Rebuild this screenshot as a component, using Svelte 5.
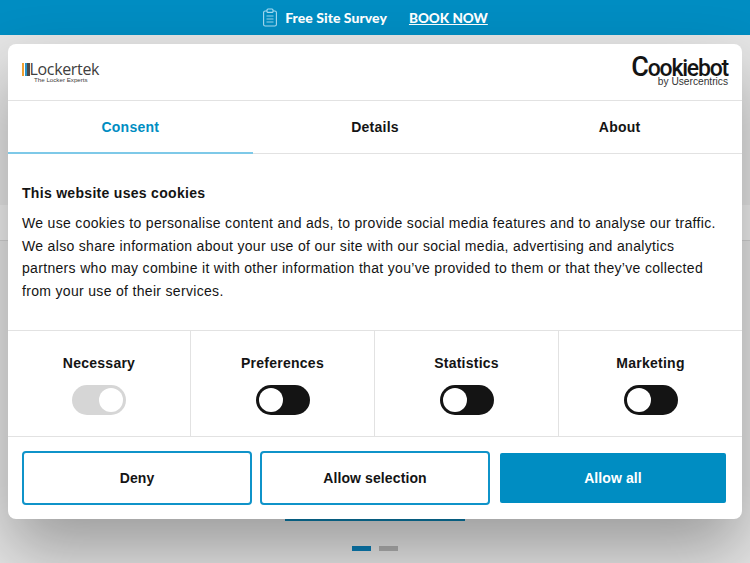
<script>
  const tabs = ["Consent", "Details", "About"];
  const toggles = [
    { name: "Necessary", locked: true },
    { name: "Preferences", locked: false },
    { name: "Statistics", locked: false },
    { name: "Marketing", locked: false }
  ];
</script>

<div class="page">
  <header class="topbar">
    <svg class="clip" width="16" height="19" viewBox="0 0 16 19" fill="none" stroke="#a9dcf1" stroke-width="1.1">
      <rect x="1.6" y="3" width="12.8" height="15" rx="1.6" />
      <rect x="5" y="1" width="6" height="3.4" rx="1" fill="#008dc2" />
      <path d="M4.5 8h7M4.5 11h7M4.5 14h7" stroke-width="0.9" />
    </svg>
    <span class="survey">Free Site Survey</span>
    <a class="book" href="#book">BOOK NOW</a>
  </header>

  <div class="behind">
    <div class="band"></div>
    <div class="cta"></div>
    <div class="dots"><i class="on"></i><i></i></div>
  </div>

  <div class="dialog">
    <div class="brand">
      <div class="locker">
        <div class="locker-top">
          <span class="bars"><i class="b1"></i><i class="b2"></i><i class="b3"></i></span>
          <span class="locker-name">Lockertek</span>
        </div>
        <div class="locker-sub">The Locker Experts</div>
      </div>
      <div class="cookiebot">
        <div class="cb-name"><span class="cb-c">C</span>ookiebot</div>
        <div class="cb-sub">by Usercentrics</div>
      </div>
    </div>

    <nav class="tabs">
      {#each tabs as tab, i (tab)}
        <div class="tab" class:active={i === 0}>{tab}</div>
      {/each}
    </nav>

    <section class="body">
      <h2>This website uses cookies</h2>
      <p>We use cookies to personalise content and ads, to provide social media features and to analyse our traffic. We also share information about your use of our site with our social media, advertising and analytics partners who may combine it with other information that you’ve provided to them or that they’ve collected from your use of their services.</p>
    </section>

    <div class="choices">
      {#each toggles as t (t.name)}
        <div class="choice">
          <strong>{t.name}</strong>
          <span class="switch" class:locked={t.locked}><i></i></span>
        </div>
      {/each}
    </div>

    <footer class="actions">
      <button class="btn">Deny</button>
      <button class="btn">Allow selection</button>
      <button class="btn primary">Allow all</button>
    </footer>
  </div>
</div>

<style>
  :global(body) {
    margin: 0;
  }

  .page {
    position: relative;
    width: 750px;
    height: 563px;
    overflow: hidden;
    background: #e6e6e6;
    font-family: "Liberation Sans", Arial, sans-serif;
    color: #141414;
  }

  .topbar {
    height: 35px;
    background: #008dc2;
    display: flex;
    align-items: center;
    justify-content: center;
    font-family: Lato, sans-serif;
    font-size: 14px;
    font-weight: 900;
    color: #fff;
  }

  .clip {
    margin-right: 7px;
  }

  .survey {
    margin-right: 22px;
    letter-spacing: 0.05px;
  }

  .book {
    color: #fff;
    font-size: 13.5px;
    text-decoration: underline;
  }

  .behind {
    height: 528px;
    display: flex;
    flex-direction: column;
    align-items: center;
  }

  .band {
    align-self: stretch;
    height: 35px;
    margin-top: 170px;
    background: rgba(255, 255, 255, 0.35);
    border-bottom: 1px solid rgba(0, 0, 0, 0.12);
  }

  .cta {
    width: 180px;
    height: 2px;
    margin-top: 278px;
    background: #0a7fae;
  }

  .dots {
    display: flex;
    gap: 8px;
    margin-top: 25px;
  }

  .dots i {
    width: 19px;
    height: 5px;
    background: #b0b0b0;
  }

  .dots i.on {
    background: #0a7db5;
  }

  .dialog {
    position: absolute;
    left: 8px;
    top: 44px;
    width: 734px;
    height: 475px;
    background: #fff;
    border-radius: 8px;
    box-shadow: 0 32px 68px rgba(0, 0, 0, 0.33);
    display: flex;
    flex-direction: column;
  }

  .brand {
    height: 57px;
    box-sizing: border-box;
    display: flex;
    justify-content: space-between;
    padding: 0 14px;
    border-bottom: 1px solid #e2e2e2;
  }

  .locker {
    margin-top: 17.5px;
    color: #404040;
  }

  .locker-top {
    display: flex;
    align-items: center;
    height: 15px;
  }

  .bars {
    display: flex;
    gap: 0.5px;
    height: 13px;
  }

  .bars i {
    width: 2.2px;
  }

  .b1 { background: #f0a030; }
  .b2 { background: #2a93c9; }
  .b3 { background: #4a4a4a; }

  .locker-name {
    font-family: "Open Sans", sans-serif;
    font-size: 16px;
    line-height: 15px;
    letter-spacing: -0.35px;
  }

  .locker-sub {
    font-size: 6.2px;
    line-height: 5px;
    margin-left: 12px;
  }

  .cookiebot {
    margin-top: 14.6px;
    text-align: right;
  }

  .cb-name {
    font-family: Roboto, sans-serif;
    font-weight: 500;
    font-size: 23px;
    line-height: 19px;
    letter-spacing: -1.2px;
  }

  .cb-c {
    font-size: 27px;
    line-height: 0;
  }

  .cb-sub {
    font-size: 10.2px;
    line-height: 7px;
    color: #333;
  }

  .tabs {
    display: grid;
    grid-template-columns: repeat(3, 1fr);
    height: 53px;
    box-sizing: border-box;
    border-bottom: 1px solid #e2e2e2;
  }

  .tab {
    display: flex;
    align-items: center;
    justify-content: center;
    font-size: 14px;
    font-weight: 700;
    letter-spacing: 0.25px;
    padding-bottom: 1px;
    box-sizing: border-box;
  }

  .tab.active {
    color: #008dc2;
    border-bottom: 2px solid #7ec9e8;
    margin-bottom: -1px;
    padding-bottom: 0;
  }

  .body {
    height: 176px;
    box-sizing: border-box;
    padding: 30px 14px 0;
  }

  h2 {
    margin: 0 0 10px;
    font-size: 14px;
    line-height: 18px;
    font-weight: 700;
    letter-spacing: 0.3px;
  }

  p {
    margin: 0;
    font-size: 14px;
    line-height: 22.5px;
    letter-spacing: 0.32px;
  }

  .choices {
    display: grid;
    grid-template-columns: 183px 184px 184px 183px;
    height: 107px;
    box-sizing: border-box;
    border-top: 1px solid #e2e2e2;
    border-bottom: 1px solid #e2e2e2;
  }

  .choice {
    display: flex;
    flex-direction: column;
    align-items: center;
    padding-top: 24px;
    border-right: 1px solid #e2e2e2;
  }

  .choice:last-child {
    border-right: 0;
  }

  .choice strong {
    font-size: 14px;
    line-height: 17px;
    letter-spacing: 0.25px;
  }

  .switch {
    width: 54px;
    height: 30px;
    margin-top: 13px;
    border-radius: 15px;
    background: #141414;
    display: flex;
    align-items: center;
    padding: 0 3px;
    box-sizing: border-box;
  }

  .switch i {
    width: 24px;
    height: 24px;
    border-radius: 50%;
    background: #fff;
  }

  .switch.locked {
    background: #d6d6d6;
    justify-content: flex-end;
  }

  .actions {
    display: grid;
    grid-template-columns: repeat(3, 1fr);
    gap: 8px;
    padding: 14px 14px 0;
  }

  .btn {
    height: 54px;
    background: #fff;
    border: 2px solid #0f93c9;
    border-radius: 4px;
    font-family: inherit;
    font-size: 14px;
    font-weight: 700;
    color: #141414;
    letter-spacing: 0.1px;
  }

  .btn.primary {
    background: #008dc2;
    color: #fff;
    border: 0;
    border-radius: 2px;
    height: 50px;
    margin: 2px 0 0 2px;
    width: 226px;
  }
</style>
